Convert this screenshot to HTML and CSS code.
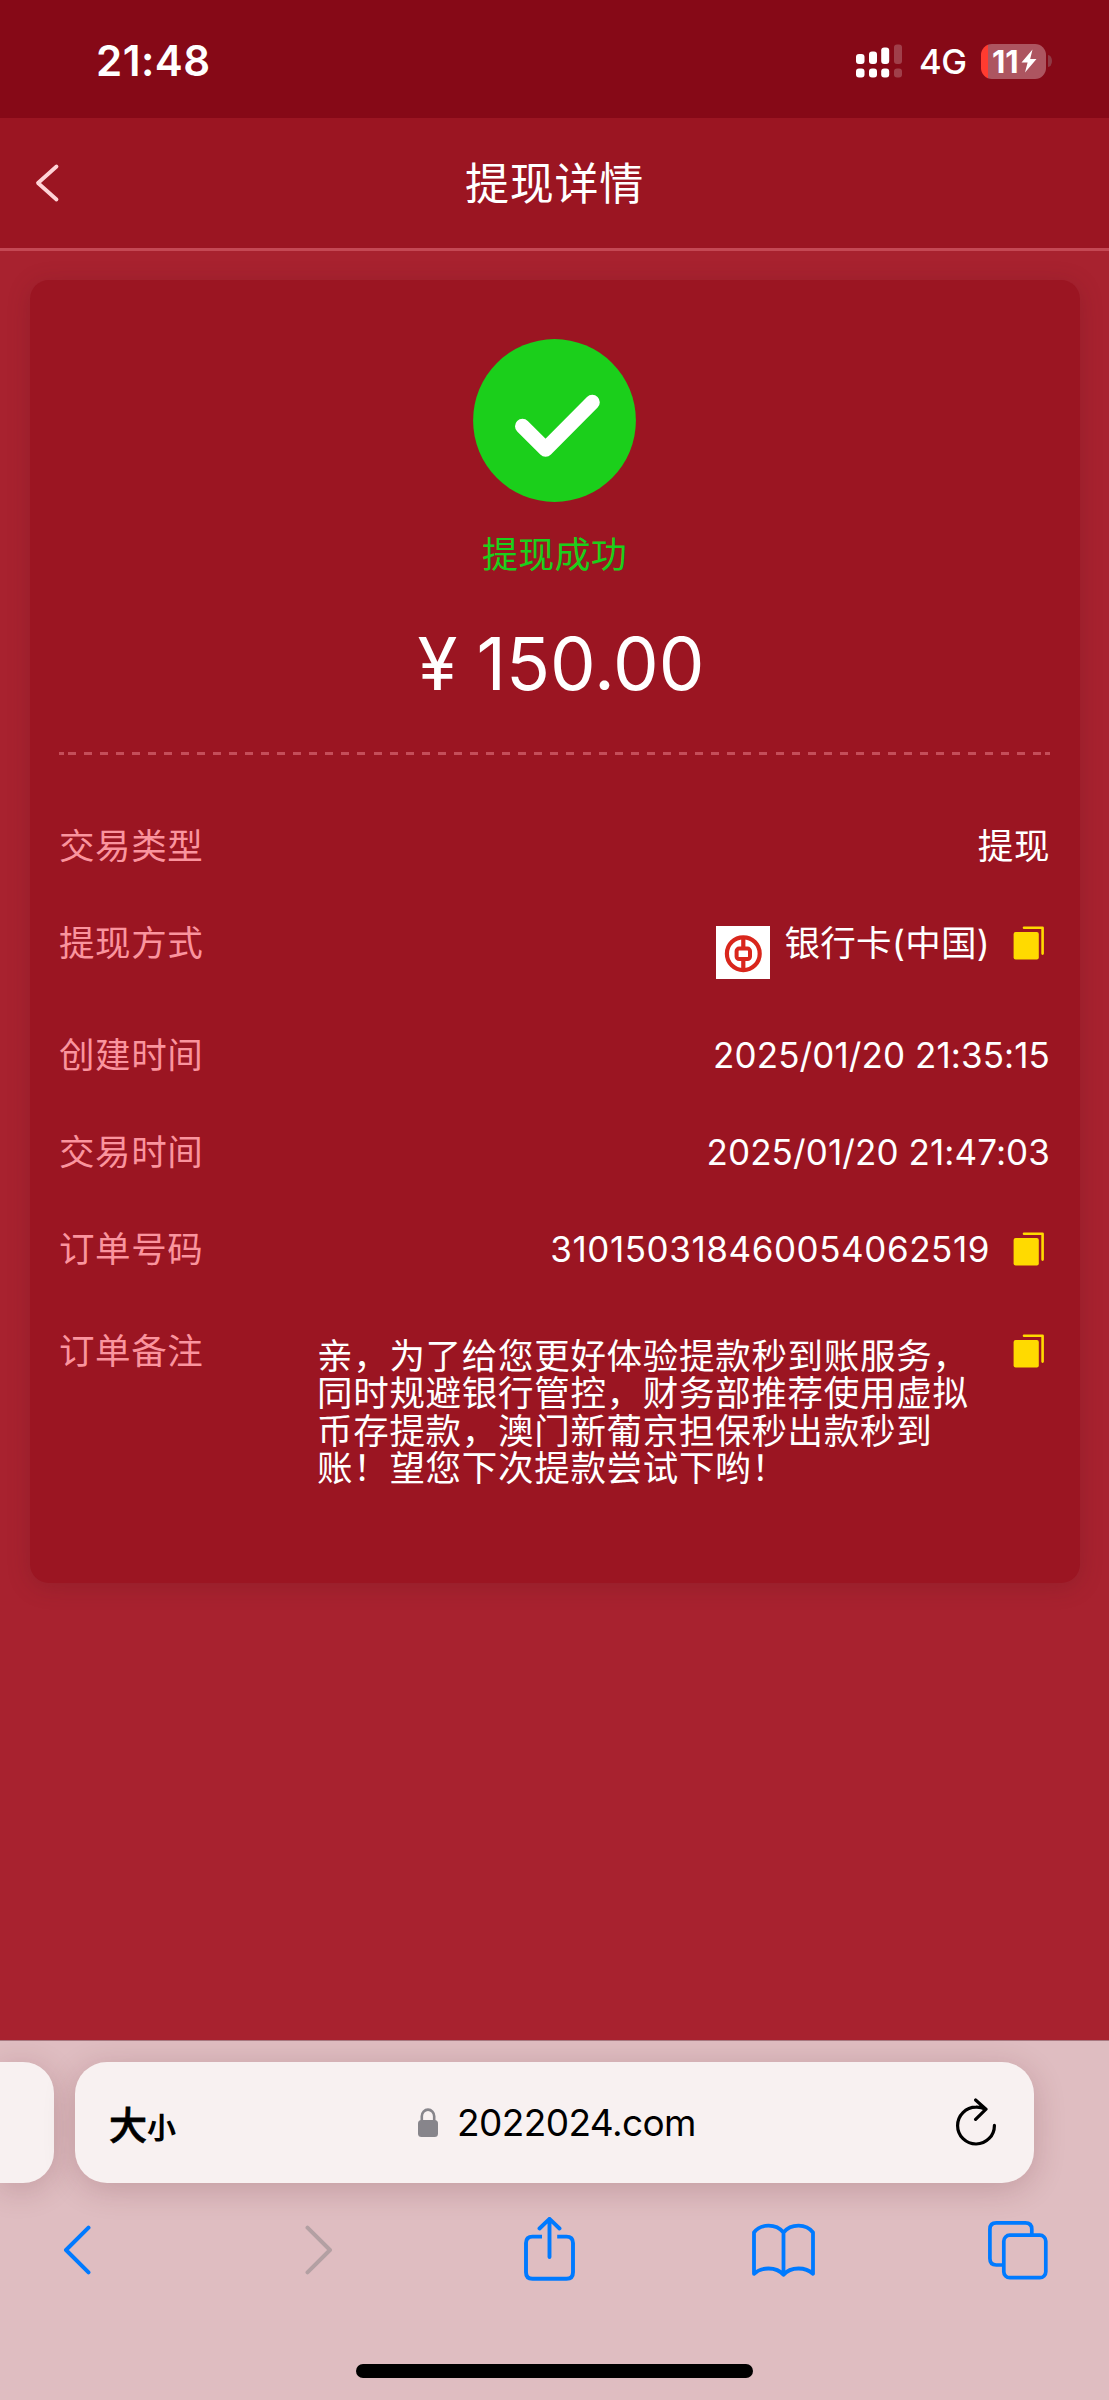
FILE: index.html
```html
<!DOCTYPE html>
<html lang="zh-CN">
<head>
<meta charset="utf-8">
<title>提现详情</title>
<link rel="stylesheet" href="styles.css">
</head>
<body>
<svg class="defs" aria-hidden="true">
  <symbol id="copy" viewBox="0 0 32 34">
    <rect x="0.6" y="6" width="25.2" height="27.6" rx="2" fill="#ffda00"/>
    <path d="M11 1.8H29.6V27.6" fill="none" stroke="#ffda00" stroke-width="2.6" stroke-linecap="round" stroke-linejoin="round"/>
  </symbol>
</svg>

<div class="status">
  <span class="time">21:48</span>
  <div class="status-right">
    <svg class="signal" width="47" height="34" viewBox="0 0 47 34" fill="#fff">
      <rect x="0" y="10" width="8.5" height="10" rx="3"/><rect x="13" y="7.5" width="8" height="12.5" rx="3"/><rect x="25.2" y="3.6" width="8" height="16.4" rx="3"/>
      <rect x="0" y="24.6" width="8.5" height="9" rx="3"/><rect x="13" y="24.6" width="8" height="9" rx="3"/><rect x="25.2" y="24.6" width="8" height="9" rx="3"/>
      <g opacity=".22"><rect x="38" y="0.4" width="8" height="19.6" rx="3"/><rect x="38" y="24.6" width="8" height="9" rx="3"/></g>
    </svg>
    <span class="net">4G</span>
    <div class="battery">
      <span class="level">11</span>
      <svg width="16" height="24" viewBox="0 0 16 24"><path d="M11.5 0.5L0.5 13.5H6.6L4 23.5L15.5 10H9.2Z" fill="#fff"/></svg>
    </div>
    <i class="nub"></i>
  </div>
</div>

<header class="nav">
  <svg class="nav-back" width="26" height="40" viewBox="0 0 26 40"><path d="M22.5 3.5L4 20L22.5 36.5" fill="none" stroke="#ffd3d7" stroke-width="3.8" stroke-linecap="round" stroke-linejoin="round"/></svg>
  <h1>提现详情</h1>
</header>

<main class="page">
  <section class="card">
    <svg class="ok" width="163" height="163" viewBox="0 0 163 163">
      <circle cx="81.5" cy="81.5" r="81.4" fill="#1bcf1b"/>
      <path d="M49.5 87.3L72.6 110.3L119.3 63.3" fill="none" stroke="#fff" stroke-width="15" stroke-linecap="round" stroke-linejoin="round"/>
    </svg>
    <p class="result">提现成功</p>
    <p class="amount"><span class="yen">¥</span><span>150.00</span></p>
    <div class="dash"></div>
    <dl>
      <div class="row"><dt>交易类型</dt><dd>提现</dd></div>
      <div class="row bank-row"><dt>提现方式</dt>
        <dd>
          <svg class="bank" width="54" height="53" viewBox="0 0 54 53">
            <rect width="54" height="53" fill="#fff"/>
            <g fill="none" stroke="#d9261c" stroke-width="4.2">
              <circle cx="27.3" cy="27.7" r="16.4"/>
              <rect x="20.6" y="22.6" width="13.4" height="10.4" rx="2.5" stroke-width="4"/>
              <path d="M27.3 11V22M27.3 34V44"/>
            </g>
          </svg>
          <span>银行卡(中国)</span>
          <svg class="copy"><use href="#copy"/></svg>
        </dd>
      </div>
      <div class="row"><dt>创建时间</dt><dd class="num">2025/01/20 21:35:15</dd></div>
      <div class="row"><dt>交易时间</dt><dd class="num">2025/01/20 21:47:03</dd></div>
      <div class="row"><dt>订单号码</dt><dd class="num order">310150318460054062519<svg class="copy"><use href="#copy"/></svg></dd></div>
      <div class="row note-row"><dt>订单备注</dt>
        <dd><p class="note">亲，为了给您更好体验提款秒到账服务，同时规避银行管控，财务部推荐使用虚拟币存提款，澳门新葡京担保秒出款秒到账！望您下次提款尝试下哟！</p><svg class="copy"><use href="#copy"/></svg></dd>
      </div>
    </dl>
  </section>
</main>

<footer class="browser">
  <div class="tabs">
    <div class="tab-prev"></div>
    <div class="address">
      <div class="size"><span class="big">大</span><span class="small">小</span></div>
      <div class="site">
        <svg width="20" height="29" viewBox="0 0 20 29"><rect x="0" y="12" width="20" height="17" rx="3.5" fill="#87858b"/><path d="M3.8 13V8.2a6.2 6.6 0 0 1 12.4 0V13" fill="none" stroke="#87858b" stroke-width="2.6"/></svg>
        <span>2022024.com</span>
      </div>
      <svg class="reload" width="42" height="50" viewBox="0 0 42 50"><path d="M39.4 27.4A18.4 18.4 0 1 1 21 9.2Q26 9 30.6 11.2M20.6 2L31 11.2L20.6 21.4" fill="none" stroke="#000" stroke-width="3.2" stroke-linecap="round" stroke-linejoin="round"/></svg>
    </div>
  </div>
  <nav class="toolbar">
    <svg width="28" height="52" viewBox="0 0 28 52"><path d="M25.5 3.7L3 26L25.5 48.3" fill="none" stroke="#007aff" stroke-width="4" stroke-linecap="round" stroke-linejoin="round"/></svg>
    <svg width="28" height="52" viewBox="0 0 28 52"><path d="M2.5 3.7L25 26L2.5 48.3" fill="none" stroke="#b3a0a3" stroke-width="4" stroke-linecap="round" stroke-linejoin="round"/></svg>
    <svg width="53" height="66" viewBox="0 0 53 66"><path d="M19 19.6H9.5Q3 19.6 3 26.1V55.2Q3 61.7 9.5 61.7H43.5Q50 61.7 50 55.2V26.1Q50 19.6 43.5 19.6H34.2" fill="none" stroke="#007aff" stroke-width="3.9"/><path d="M26.5 40V2.5M16.5 11.5L26.5 1.8L36.5 11.5" fill="none" stroke="#007aff" stroke-width="3.9" stroke-linecap="round" stroke-linejoin="round"/></svg>
    <svg width="65" height="54" viewBox="0 0 65 54"><path d="M32.5 9.5C28 4 23 2.7 17.5 2.7C11 2.7 6 5.5 3 9.5V50.8C7 47 12 45.5 17.5 45.5C23 45.5 29 47.5 32.5 51.8C36 47.5 42 45.5 47.5 45.5C53 45.5 58 47 62 50.8V9.5C59 5.5 54 2.7 47.5 2.7C42 2.7 37 4 32.5 9.5ZM32.5 9.5V51" fill="none" stroke="#007aff" stroke-width="3.8" stroke-linejoin="round"/></svg>
    <svg width="61" height="60" viewBox="0 0 61 60"><rect x="16.8" y="15.2" width="42" height="42.5" rx="6" fill="none" stroke="#007aff" stroke-width="3.7"/><path d="M44.8 14V9.2Q44.8 2.8 38.4 2.8H9.3Q2.9 2.8 2.9 9.2V38.6Q2.9 45 9.3 45H15.5" fill="none" stroke="#007aff" stroke-width="3.7"/></svg>
  </nav>
  <div class="home"></div>
</footer>
</body>
</html>
```
FILE: styles.css
```css
* { box-sizing: border-box; margin: 0; padding: 0; }
body {
  width: 1109px; height: 2400px; overflow: hidden;
  display: flex; flex-direction: column;
  background: #a8222f; color: #fff;
  font-family: Inter, "Noto Sans CJK SC", sans-serif;
}
svg { display: block; flex: none; }
.defs { display: none; }

.status {
  height: 118px; background: #860917; flex: none;
  display: flex; align-items: flex-start; justify-content: space-between;
  padding: 43px 57px 0 96px;
}
.time { font-size: 42px; font-weight: 600; line-height: 36px; letter-spacing: .5px; }
.status-right { display: flex; align-items: center; height: 36px; }
.net { font-size: 34.5px; font-weight: 500; line-height: 36px; margin: 2px 0 0 16px; width: 62px; letter-spacing: -.5px; }
.battery {
  width: 65px; height: 35px; border-radius: 11px;
  background: linear-gradient(90deg, #ff3b30 7px, #ad5560 7px);
  display: flex; align-items: center; padding-left: 11px; gap: 2px;
}
.level { font-size: 31px; font-weight: 700; width: 27px; line-height: 35px; }
.nub { width: 4px; height: 12px; margin-left: 2px; border-radius: 0 4px 4px 0 / 0 6px 6px 0; background: #8f3a45; }

.nav {
  height: 133px; background: #9b1522; border-bottom: 3px solid #c44854; flex: none;
  display: grid; grid-template-columns: 100px 1fr 100px; align-items: center;
}
.nav-back { margin-left: 34px; }
h1 { font-size: 44px; font-weight: 400; letter-spacing: .8px; text-align: center; line-height: 60px; padding-top: 2px; }

.page { flex: 1; padding: 29px 29.5px 0; }
.card {
  height: 1303px; background: #9b1522; border-radius: 19px;
  padding: 59px 29.5px 0; box-shadow: 0 4px 22px rgba(90, 25, 30, .25);
  display: flex; flex-direction: column; align-items: center;
}
.result { margin-top: 31px; font-size: 36px; line-height: 44px; letter-spacing: .3px; color: #1bcf1b; }
.amount { margin-top: 49px; height: 76px; display: flex; gap: 19px; font-size: 72.5px; line-height: 76px; padding-left: 13px; }
.dash {
  width: 100%; height: 3px; margin-top: 50px;
  background:
    linear-gradient(#c44d59, #c44d59) 0 0 / 5px 100% no-repeat,
    linear-gradient(#c44d59, #c44d59) 100% 0 / 5px 100% no-repeat,
    repeating-linear-gradient(90deg, #c44d59 0 8px, transparent 8px 16.08px) 9px 0 / 973px 100% no-repeat;
}
dl { width: 100%; margin-top: 43px; }
.row { display: flex; justify-content: space-between; min-height: 97px; padding-top: 30px; font-size: 35.5px; line-height: 37px; }
dt { color: #fa949e; letter-spacing: .6px; }
dd { display: flex; align-items: flex-start; letter-spacing: .6px; }
.copy { width: 32px; height: 34px; margin: 1px 5px 0 24px; }
.bank-row { min-height: 111.5px; }
.bank-row dd { letter-spacing: .3px; }
.bank-row .copy { margin-left: 23px; }
.bank { margin: 1px 15px 0 0; }
.num { font-size: 35px; letter-spacing: .1px; }
.order { letter-spacing: .57px; }
.order .copy { margin-left: 23px; }
.note-row { padding-top: 35px; }
.note { width: 656px; margin-top: 5px; line-height: 37.6px; letter-spacing: .7px; }
.note + .copy { margin-left: 40px; }

.browser { height: 360px; flex: none; background: #dfbdc1; border-top: 1px solid #a87880; color: #000; overflow: hidden; }
.tabs { display: flex; gap: 21px; padding-top: 21px; }
.tab-prev { width: 54px; height: 121px; background: #f8f1f1; border-radius: 0 31px 31px 0; box-shadow: 0 6px 32px rgba(80, 20, 30, .2); }
.address {
  width: 959px; height: 121px; border-radius: 32px; background: #f8f1f1;
  box-shadow: 0 6px 32px rgba(80, 20, 30, .2);
  display: grid; grid-template-columns: 200px 1fr 200px; align-items: center; padding: 0 37px 0 34px;
}
.size { display: flex; align-items: baseline; font-weight: 700; }
.big { font-size: 38px; font-weight: 500; -webkit-text-stroke: .8px #000; }
.small { font-size: 29px; font-weight: 700; }
.site { display: flex; justify-content: center; align-items: center; gap: 19px; font-size: 37px; letter-spacing: -.6px; padding-left: 8px; }
.reload { justify-self: end; }
.toolbar {
  height: 66px; margin-top: 34px;
  display: grid; grid-template-columns: 154px 329px 133px 335px 133px;
  align-items: center; justify-items: center;
}
.home { width: 397px; height: 14px; border-radius: 7px; background: #000; margin: 81px auto 0; }
```
